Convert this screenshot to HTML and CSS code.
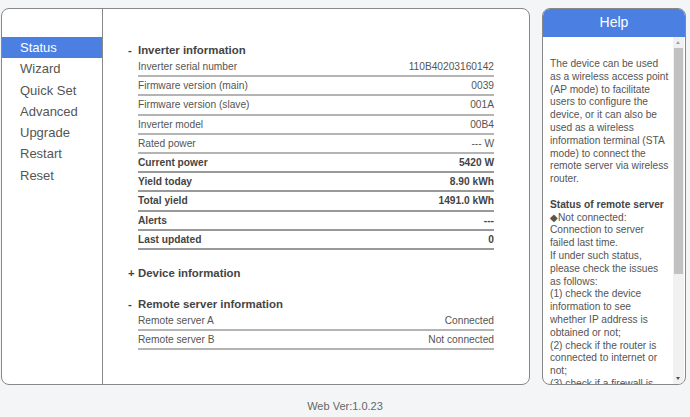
FILE: index.html
```html
<!DOCTYPE html>
<html>
<head>
<meta charset="utf-8">
<link rel="stylesheet" href="styles.css">
</head>
<body>
<div class="page">
  <div class="main">
    <nav class="side">
      <div class="item active">Status</div>
      <div class="item">Wizard</div>
      <div class="item">Quick Set</div>
      <div class="item">Advanced</div>
      <div class="item">Upgrade</div>
      <div class="item">Restart</div>
      <div class="item">Reset</div>
    </nav>
    <section class="content">
      <div class="sec">
        <div class="head"><span class="sign">-</span>Inverter information</div>
        <div class="row"><span>Inverter serial number</span><span>110B40203160142</span></div>
        <div class="row"><span>Firmware version (main)</span><span>0039</span></div>
        <div class="row"><span>Firmware version (slave)</span><span>001A</span></div>
        <div class="row"><span>Inverter model</span><span>00B4</span></div>
        <div class="row"><span>Rated power</span><span>--- W</span></div>
        <div class="row b"><span>Current power</span><span>5420 W</span></div>
        <div class="row b"><span>Yield today</span><span>8.90 kWh</span></div>
        <div class="row b"><span>Total yield</span><span>1491.0 kWh</span></div>
        <div class="row b"><span>Alerts</span><span>---</span></div>
        <div class="row b"><span>Last updated</span><span>0</span></div>
      </div>
      <div class="sec">
        <div class="head"><span class="sign">+</span>Device information</div>
      </div>
      <div class="sec">
        <div class="head"><span class="sign">-</span>Remote server information</div>
        <div class="row"><span>Remote server A</span><span>Connected</span></div>
        <div class="row"><span>Remote server B</span><span>Not connected</span></div>
      </div>
    </section>
  </div>
  <aside class="help">
    <div class="help-title">Help</div>
    <div class="help-body">
      <div class="help-text">
        <p>The device can be used<br>as a wireless access point<br>(AP mode) to facilitate<br>users to configure the<br>device, or it can also be<br>used as a wireless<br>information terminal (STA<br>mode) to connect the<br>remote server via wireless<br>router.</p>
        <p><b>Status of remote server</b><br>◆Not connected:<br>Connection to server<br>failed last time.<br>If under such status,<br>please check the issues<br>as follows:<br>(1) check the device<br>information to see<br>whether IP address is<br>obtained or not;<br>(2) check if the router is<br>connected to internet or<br>not;<br>(3) check if a firewall is<br>set on the router;</p>
      </div>
      <div class="scrollbar">
        <div class="arrow up"></div>
        <div class="track"><div class="thumb"></div></div>
        <div class="arrow down"></div>
      </div>
    </div>
  </aside>
</div>
<footer class="foot">Web Ver:1.0.23</footer>
</body>
</html>
```

FILE: styles.css
```css
html, body {
  margin: 0;
  padding: 0;
  background: #f4f5f7;
  font-family: "Liberation Sans", Arial, sans-serif;
  color: #555;
}
.page {
  display: flex;
  gap: 12px;
  padding: 8px 4px 0 1px;
  height: 377px;
  box-sizing: content-box;
}
.main {
  width: 529px;
  box-sizing: border-box;
  height: 377px;
  border: 1px solid #888;
  border-radius: 8px;
  background: #fff;
  display: flex;
}
.side {
  width: 100px;
  border-right: 1px solid #888;
  padding-top: 28px;
  flex: none;
}
.item {
  height: 21.3px;
  line-height: 21px;
  padding-left: 18px;
  font-size: 13px;
  color: #555;
}
.item.active {
  background: #4b7fe2;
  color: #fff;
}
.content {
  flex: 1;
  padding: 33px 35px 0 25px;
}
.sec + .sec {
  margin-top: 15px;
}
.head {
  font-weight: bold;
  font-size: 11.4px;
  line-height: 16px;
  color: #444;
}
.sign {
  display: inline-block;
  width: 10px;
}
.row {
  display: flex;
  justify-content: space-between;
  margin-left: 10px;
  height: 17.2px;
  line-height: 17px;
  font-size: 10.2px;
  color: #555;
  border-bottom: 2px solid #b4b4b4;
}
.row.b {
  font-weight: bold;
  color: #444;
  border-bottom-color: #999;
}
.help {
  width: 144px;
  height: 377px;
  box-sizing: border-box;
  border: 1px solid #888;
  border-radius: 8px;
  background: #fff;
  display: flex;
  flex-direction: column;
  overflow: hidden;
}
.help-title {
  background: #4b7fe2;
  color: #fff;
  text-align: center;
  font-size: 14px;
  height: 28px;
  line-height: 27px;
  flex: none;
}
.help-body {
  flex: 1;
  display: flex;
  min-height: 0;
}
.help-text {
  flex: 1;
  overflow: hidden;
  white-space: nowrap;
  padding: 21px 0 0 7px;
  font-size: 10.2px;
  line-height: 12.8px;
  color: #555;
}
.help-text p {
  margin: 0 0 12.8px;
}
.help-text b {
  color: #444;
}
.scrollbar {
  width: 11px;
  flex: none;
  margin-right: 1px;
  background: #f1f1f1;
  display: flex;
  flex-direction: column;
}
.arrow {
  height: 11px;
  flex: none;
  position: relative;
}
.arrow::after {
  content: "";
  position: absolute;
  left: 3px;
  width: 0;
  height: 0;
  border-left: 2.5px solid transparent;
  border-right: 2.5px solid transparent;
}
.arrow.up::after {
  top: 4px;
  border-bottom: 3px solid #a3a3a3;
}
.arrow.down::after {
  top: 4px;
  border-top: 3px solid #505050;
}
.track {
  flex: 1;
}
.thumb {
  margin: 0 1px;
  height: 226px;
  background: #c1c1c1;
}
.foot {
  text-align: center;
  font-size: 11px;
  color: #666;
  padding-top: 15px;
}
```
